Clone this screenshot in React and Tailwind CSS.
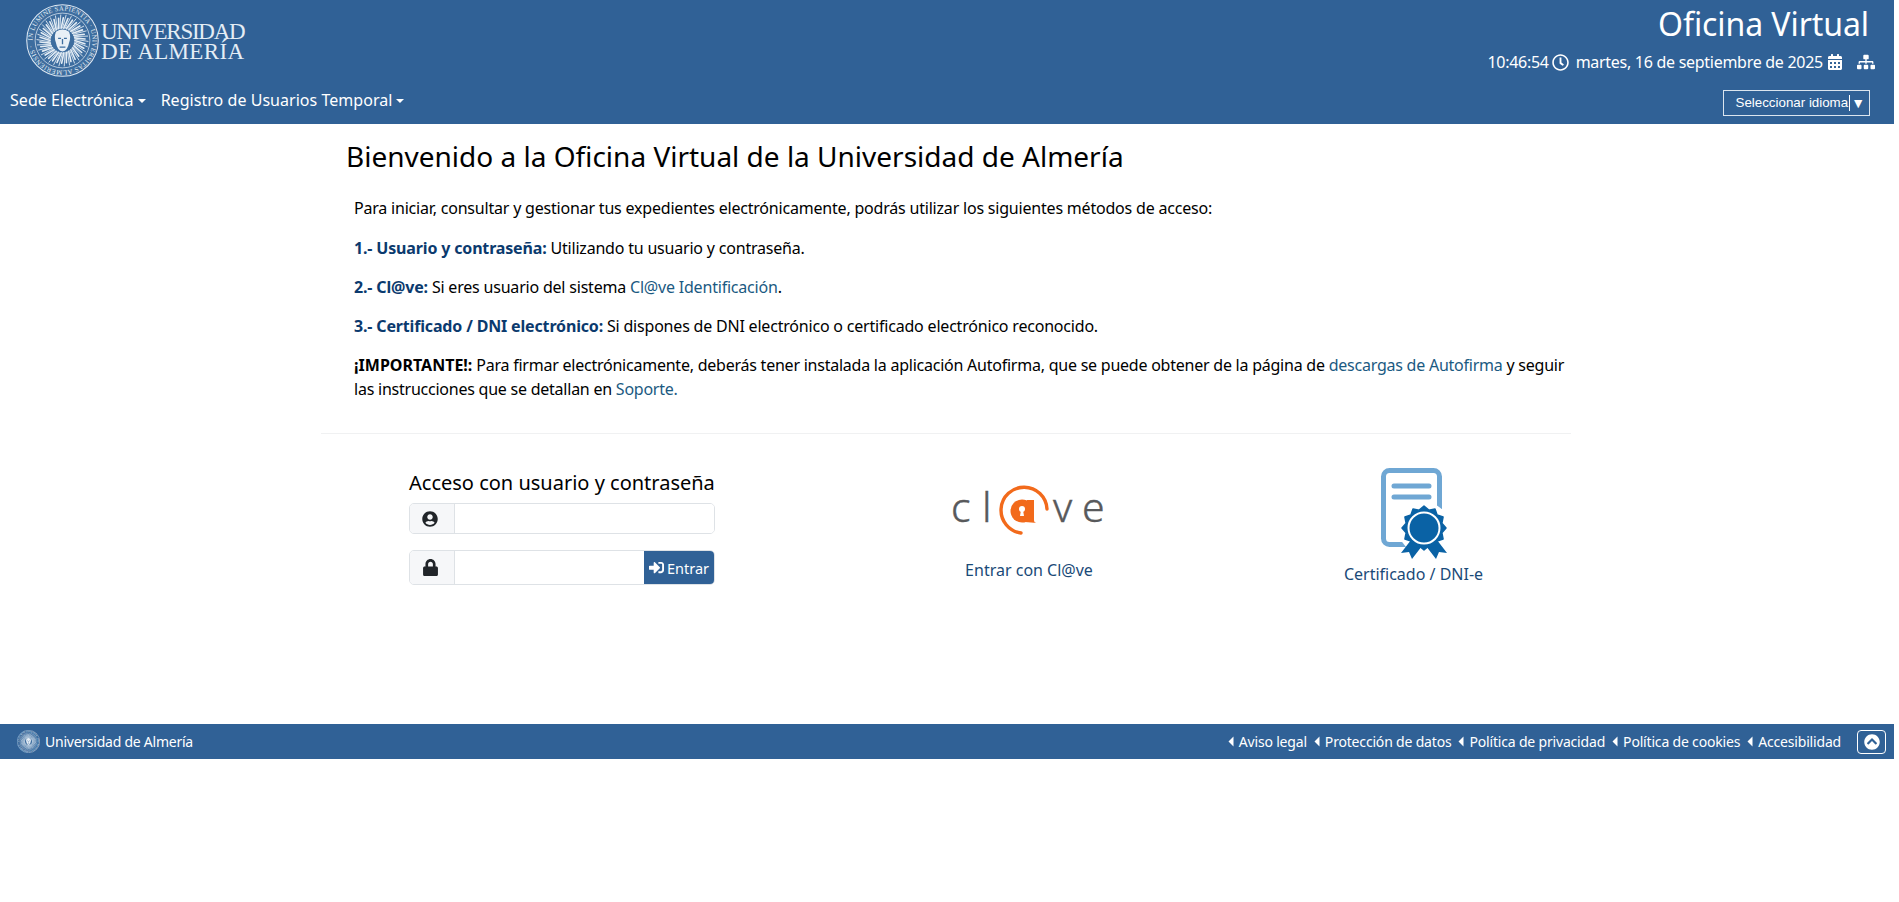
import React from "react";
import { FaRegClock, FaCalendarAlt, FaSitemap, FaUserCircle, FaLock, FaSignInAlt, FaChevronCircleUp } from "react-icons/fa";

const Caret = () => (
  <span className="ml-[4px] inline-block align-[3px] border-x-[4px] border-t-[4px] border-x-transparent border-t-white" />
);

function Emblem({ size, id }) {
  const rays = [];
  for (let i = 0; i < 60; i++) {
    const a = (i / 60) * Math.PI * 2;
    const r1 = 17;
    const r2 = i % 2 ? 35 : 31;
    rays.push(
      <line key={i} x1={50 + r1 * Math.cos(a)} y1={50 + r1 * Math.sin(a)} x2={50 + r2 * Math.cos(a + 0.14)} y2={50 + r2 * Math.sin(a + 0.14)} stroke="#e4edf5" strokeWidth={i % 2 ? 1.2 : 2.2} strokeLinecap="round" />
    );
  }
  return (
    <svg width={size} height={size} viewBox="0 0 100 100" className="shrink-0">
      <circle cx="50" cy="50" r="49" fill="#3d6d9f" stroke="#dfe9f3" strokeWidth="1.4" />
      <circle cx="50" cy="50" r="37.5" fill="none" stroke="#dfe9f3" strokeWidth="1" />
      <defs>
        <path id={id} d="M50 50 m-41 0 a41 41 0 1 1 82 0 a41 41 0 1 1 -82 0" />
      </defs>
      <text fill="#e4edf5" fontSize="9.2" fontFamily="'Liberation Serif', serif" letterSpacing="0.4">
        <textPath href={`#${id}`}>IN LUMINE SAPIENTIA · UNIVERSITAS ALMERIENSIS ·</textPath>
      </text>
      {rays}
      <path d="M41 38 q9 -6 18 0 q3 8 0 15 q-2 11 -9 12 q-7 -1 -9 -12 q-3 -7 0 -15z" fill="#e8eff6" />
      <path d="M44 47 h4 M52 47 h4 M50 48 v7 M46 59 h8" stroke="#3d6d9f" strokeWidth="1.8" fill="none" />
    </svg>
  );
}

function ClaveLogo() {
  return (
    <svg width="158" height="62" viewBox="-3 -12 158 62" className="block">
      <g fill="#58595b" stroke="#58595b" strokeWidth="0.4" fontFamily="'Noto Sans', sans-serif" fontSize="41" fontWeight="300">
        <text x="-2" y="36">c</text>
        <text x="29" y="36">l</text>
        <text x="100" y="36">v</text>
        <text x="129" y="36">e</text>
      </g>
      <path d="M94 23 A23 23 0 1 0 68 47" fill="none" stroke="#f26a1b" strokeWidth="3.4" strokeLinecap="round" />
      <circle cx="69" cy="25" r="11.5" fill="#f26a1b" />
      <path d="M74 14 h7 v20 q0 3 3 3 l-12 -1z" fill="#f26a1b" />
      <circle cx="69" cy="23" r="3" fill="#fff" />
      <path d="M68 24 h2 l1 6 h-4z" fill="#fff" />
    </svg>
  );
}

function CertIcon() {
  const pts = [];
  const n = 24;
  for (let i = 0; i < n; i++) {
    const a = (i / n) * Math.PI * 2 - Math.PI / 2;
    const r = i % 2 ? 18.5 : 22;
    pts.push(`${43 + r * Math.cos(a)},${60 + r * Math.sin(a)}`);
  }
  return (
    <svg width="68" height="92" viewBox="0 0 68 92" className="block ml-[2px]">
      <rect x="2.5" y="2.5" width="56" height="74" rx="6" fill="none" stroke="#6fa7d4" strokeWidth="5" />
      <path d="M13 18 H48 M13 29 H48" stroke="#6fa7d4" strokeWidth="5" strokeLinecap="round" />
      <circle cx="43" cy="60" r="26" fill="#fff" />
      <path d="M30 72 L20 85 L28 84 L31 91 L41 78z M56 72 L66 85 L58 84 L55 91 L45 78z" fill="#0a62a5" />
      <polygon points={pts.join(" ")} fill="#0a62a5" stroke="#0a62a5" strokeWidth="1.5" strokeLinejoin="round" />
      <circle cx="43" cy="60" r="15.5" fill="#0a62a5" stroke="#fff" strokeWidth="2" />
    </svg>
  );
}

const FootLink = ({ children, className = "" }) => (
  <a className={`flex items-center text-white tracking-[-0.18px] ${className}`}>
    <svg width="6" height="11" viewBox="0 0 6 11" className="mr-[5px]"><path d="M5.5 .5 V10.5 L.5 5.5z" fill="#fff" /></svg>
    {children}
  </a>
);

const B = ({ children }) => <b className="font-bold tracking-[-0.16px] text-[#0b3a6e]">{children}</b>;
const L = ({ children }) => <a className="text-[#1b5a82]">{children}</a>;

export default function App() {
  return (
    <div className="w-[1894px] font-['Noto_Sans',sans-serif] text-[16px] leading-6 text-black bg-white">
      <header className="h-[124px] bg-[#306196] text-white flex flex-col">
        <div className="flex justify-between h-[84px]">
          <div className="flex items-start pl-[26px] pt-[4px]">
            <Emblem size={73} id="emblem-big" />
            <div className="ml-[2px] mt-[18px] font-['Liberation_Serif',serif] text-[23px] leading-[20px] text-[#e4edf5]">
              <div className="tracking-[-1.25px]">UNIVERSIDAD</div>
              <div className="tracking-[0.35px]">DE ALMERÍA</div>
            </div>
          </div>
          <div className="flex flex-col items-end pr-[19px] pt-[3px]">
            <div className="text-[32px] leading-[42px] pr-[6px] tracking-[-0.08px]">Oficina Virtual</div>
            <div className="flex items-center h-[24px] mt-[5px] tracking-[-0.28px]">
              <span>10:46:54</span>
              <FaRegClock className="ml-[3px] text-[17px]" />
              <span className="ml-[7px]">martes, 16 de septiembre de 2025</span>
              <FaCalendarAlt className="ml-[4px] text-[16px]" />
              <FaSitemap className="ml-[14px] text-[18px]" />
            </div>
          </div>
        </div>
        <div className="flex justify-between">
          <nav className="flex pl-[10px] pt-[4px] gap-[15px] tracking-[0.04px]">
            <a className="text-white">Sede Electrónica<Caret /></a>
            <a className="text-white">Registro de Usuarios Temporal<Caret /></a>
          </nav>
          <div className="mr-[24px] mt-[6px] h-[26px] w-[147px] border border-[#dbe5ef] flex items-center justify-end pr-[4px] font-['Liberation_Sans',sans-serif] text-[13.33px] text-white">
            <span className="pr-[1px] leading-[16px] border-r border-white whitespace-nowrap">Seleccionar idioma</span>
            <span className="ml-[1px] text-[14px]">▼</span>
          </div>
        </div>
      </header>

      <main className="h-[600px] w-[1250px] mx-auto">
        <h1 className="pt-[15px] pl-[24px] text-[28px] leading-[34px] font-normal">Bienvenido a la Oficina Virtual de la Universidad de Almería</h1>
        <div className="mt-[23px] pl-[32px] pr-[2px] tracking-[-0.2px]">
          <p className="mb-[16px]">Para iniciar, consultar y gestionar tus expedientes electrónicamente, podrás utilizar los siguientes métodos de acceso:</p>
          <p className="mb-[15px]"><B>1.- Usuario y contraseña:</B> Utilizando tu usuario y contraseña.</p>
          <p className="mb-[15px]"><B>2.- Cl@ve:</B> Si eres usuario del sistema <L>Cl@ve Identificación</L>.</p>
          <p className="mb-[15px]"><B>3.- Certificado / DNI electrónico:</B> Si dispones de DNI electrónico o certificado electrónico reconocido.</p>
          <p className="tracking-[-0.235px]"><b className="font-bold tracking-[0px]">¡IMPORTANTE!:</b> Para firmar electrónicamente, deberás tener instalada la aplicación Autofirma, que se puede obtener de la página de <L>descargas de Autofirma</L> y seguir las instrucciones que se detallan en <L>Soporte.</L></p>
        </div>
        <hr className="mt-[32px] -ml-px mr-px border-t border-[#f0f1f2]" />
        <div className="flex">
          <div className="w-[477px] pt-[35px] pl-[87px]">
            <div className="w-[306px]">
              <h2 className="text-[20px] leading-[28px] font-normal whitespace-nowrap">Acceso con usuario y contraseña</h2>
              <div className="mt-[6px] h-[31px] flex border border-[#dee2e6] rounded-[5px] overflow-hidden">
                <span className="w-[45px] pr-[4px] bg-[#f6f7f9] border-r border-[#dee2e6] flex items-center justify-center text-[#212529]"><FaUserCircle className="text-[16px]" /></span>
                <input aria-label="Usuario" className="flex-1 min-w-0 outline-none bg-white" />
              </div>
              <div className="mt-[16px] h-[35px] flex border border-[#dee2e6] rounded-[5px] overflow-hidden">
                <span className="w-[45px] pr-[4px] bg-[#f6f7f9] border-r border-[#dee2e6] flex items-center justify-center text-[#212529]"><FaLock className="text-[17px]" /></span>
                <input aria-label="Contraseña" type="password" className="flex-1 min-w-0 outline-none bg-white" />
                <button className="w-[70px] bg-[#306196] text-white text-[14.5px] flex items-center justify-center gap-[3px]"><FaSignInAlt className="text-[15px]" />Entrar</button>
              </div>
            </div>
          </div>
          <div className="w-[460px] pt-[40px] flex flex-col items-center">
            <ClaveLogo />
            <a className="mt-[22px] text-[#1a4a78]">Entrar con Cl@ve</a>
          </div>
          <div className="w-[309px] pt-[34px] flex flex-col items-center">
            <CertIcon />
            <a className="mt-[2px] text-[#1a4a78]">Certificado / DNI-e</a>
          </div>
        </div>
      </main>

      <footer className="h-[35px] bg-[#306196] text-white text-[14px] flex items-center justify-between">
        <div className="flex items-center pl-[17px]">
          <Emblem size={23} id="emblem-small" />
          <span className="ml-[5px] tracking-[-0.24px]">Universidad de Almería</span>
        </div>
        <div className="flex items-center pr-[8px]">
          <FootLink>Aviso legal</FootLink>
          <FootLink className="ml-[7px]">Protección de datos</FootLink>
          <FootLink className="ml-[7px]">Política de privacidad</FootLink>
          <FootLink className="ml-[7px]">Política de cookies</FootLink>
          <FootLink className="ml-[7px]">Accesibilidad</FootLink>
          <span className="ml-[16px] w-[29px] h-[24px] border border-white rounded-[4px] flex items-center justify-center"><FaChevronCircleUp className="text-[16px]" /></span>
        </div>
      </footer>
    </div>
  );
}
